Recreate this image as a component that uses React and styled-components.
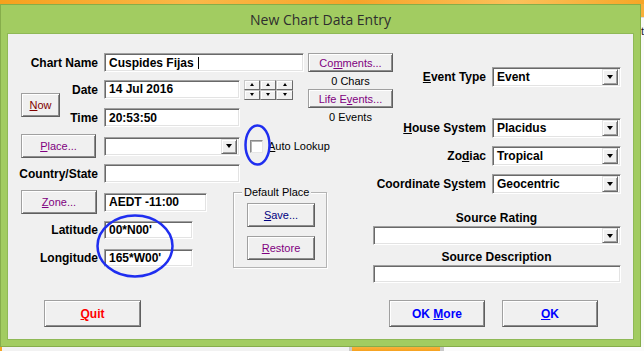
import styled, { createGlobalStyle } from "styled-components";

const GlobalStyle = createGlobalStyle`
  html, body {
    margin: 0;
    padding: 0;
  }
  body {
    background: #f4f4f4;
    font-family: "Liberation Sans", Arial, sans-serif;
    overflow: hidden;
  }
`;

const Screen = styled.div`
  position: relative;
  width: 644px;
  height: 351px;
  display: flex;
  flex-direction: column;
  overflow: hidden;
`;

const TopStrip = styled.div`
  height: 4px;
  flex-shrink: 0;
  background: linear-gradient(90deg, #f6a11d, #fab848 30%, #f7a428 55%, #fbc15a 80%, #f6a626);
`;

const Middle = styled.div`
  display: flex;
  height: 343px;
  flex-shrink: 0;
`;

const RightSliver = styled.div`
  flex: 1;
  background: linear-gradient(180deg, #f8b03a 0, #f8b03a 13px, #dcdcdc 13px, #dcdcdc 14px, #fafafa 14px);
  font-size: 11px;
  color: #222;
  padding-top: 22px;
  overflow: hidden;
  line-height: 11px;
`;

const BottomStrip = styled.div`
  height: 4px;
  display: flex;
  flex-shrink: 0;
`;

const Segment = styled.div`
  width: ${(p) => p.$w}px;
  flex: ${(p) => (p.$grow ? 1 : "none")};
  background: ${(p) => p.$bg};
`;

const Window = styled.div`
  width: 641px;
  height: 343px;
  flex-shrink: 0;
  box-sizing: border-box;
  border: 1px solid #86ad4b;
  background: #a2cc61;
  display: flex;
  flex-direction: column;
  padding: 0 6px 6px;
`;

const TitleBar = styled.div`
  height: 28px;
  flex-shrink: 0;
  display: flex;
  align-items: center;
  justify-content: center;
  font-family: "Open Sans", "Noto Sans", sans-serif;
  font-size: 14px;
  color: #2e2e2e;
`;

const Client = styled.div`
  flex: 1;
  min-height: 0;
  overflow: hidden;
  box-sizing: border-box;
  background: #f0f0f0;
  border: 1px solid #8fb956;
  padding: 19px 0 0 12px;
  display: flex;
  flex-direction: column;
`;

const Body = styled.div`
  display: grid;
  grid-template-columns: 352px 249px;
  align-items: start;
  flex-shrink: 0;
`;

const LeftCol = styled.div`
  display: flex;
  flex-direction: column;
`;

const RightCol = styled.div`
  display: flex;
  flex-direction: column;
`;

const TopBlock = styled.div`
  display: flex;
  align-items: flex-start;
  width: 373px;
`;

const TopFields = styled.div`
  width: 284px;
  display: flex;
  flex-direction: column;
`;

const MiddleStack = styled.div`
  width: 85px;
  margin-left: 4px;
  display: flex;
  flex-direction: column;
  align-items: center;
`;

const FieldRow = styled.div`
  display: grid;
  grid-template-columns: 78px auto;
  column-gap: 6px;
  align-items: center;
  height: ${(p) => p.$h || 19}px;
  margin-top: ${(p) => p.$mt || 0}px;
`;

const DateTimeGrid = styled.div`
  display: grid;
  grid-template-columns: 78px auto;
  grid-template-rows: 19px 19px;
  column-gap: 6px;
  row-gap: 9px;
  align-items: center;
  margin-top: 8px;
`;

const Label = styled.span`
  grid-column: 1;
  grid-row: ${(p) => p.$row || "auto"};
  justify-self: end;
  font-weight: bold;
  font-size: 12px;
  color: #000;
  white-space: nowrap;
`;

const Cell = styled.div`
  grid-column: 2;
  grid-row: ${(p) => p.$row};
  display: flex;
  align-items: flex-start;
`;

const Inline = styled.div`
  display: flex;
  align-items: center;
`;

const Sunken = styled.div`
  box-sizing: border-box;
  width: ${(p) => p.$w}px;
  height: ${(p) => p.$h || 19}px;
  margin-left: ${(p) => p.$ml || 0}px;
  margin-top: ${(p) => p.$mt || 0}px;
  background: #fff;
  border: 1px solid;
  border-color: #a0a0a0 #ffffff #ffffff #a0a0a0;
  box-shadow: inset 1px 1px 0 #696969, inset -1px -1px 0 #e3e3e3;
  display: flex;
  align-items: center;
  padding: 0 2px 0 4px;
  font-weight: bold;
  font-size: 12px;
  color: #000;
  white-space: nowrap;
  flex-shrink: 0;
`;

const Caret = styled.span`
  display: inline-block;
  width: 1px;
  height: 12px;
  background: #000;
  margin-left: 4px;
`;

const SelectText = styled.span`
  flex: 1;
`;

const ArrowBox = styled.div`
  width: 16px;
  height: ${(p) => p.$h || 15}px;
  box-sizing: border-box;
  background: #f0f0f0;
  border: 1px solid;
  border-color: #e3e3e3 #696969 #696969 #e3e3e3;
  box-shadow: inset 1px 1px 0 #fff, inset -1px -1px 0 #a0a0a0;
  display: flex;
  align-items: center;
  justify-content: center;
  flex-shrink: 0;
`;

const Tri = styled.span`
  width: 0;
  height: 0;
  border-left: ${(p) => p.$s}px solid transparent;
  border-right: ${(p) => p.$s}px solid transparent;
  ${(p) => (p.$up ? "border-bottom" : "border-top")}: ${(p) => p.$t}px solid #000;
`;

const Spinner = styled.div`
  display: grid;
  grid-template-columns: 16px 16px 17px;
  grid-template-rows: 10px 10px;
  margin-left: 4px;
`;

const SpinCell = styled.div`
  box-sizing: border-box;
  background: #f0f0f0;
  border: 1px solid;
  border-color: #c8c8c8 #6a6a6a #6a6a6a #c8c8c8;
  box-shadow: inset 1px 1px 0 #fff;
  display: flex;
  align-items: center;
  justify-content: center;
`;

const Button = styled.button`
  box-sizing: border-box;
  width: ${(p) => p.$w}px;
  height: ${(p) => p.$h}px;
  margin: ${(p) => p.$m || 0};
  padding: 0;
  background: #f0f0f0;
  border: 1px solid;
  border-color: #a0a0a0 #5f5f5f #5f5f5f #a0a0a0;
  box-shadow: inset 1px 1px 0 #ffffff, inset -1px -1px 0 #8d8d8d;
  font-family: "Liberation Sans", Arial, sans-serif;
  font-size: ${(p) => (p.$bold ? 12 : 11)}px;
  font-weight: ${(p) => (p.$bold ? "bold" : "normal")};
  color: ${(p) => p.$color || "#800080"};
  display: flex;
  align-items: center;
  justify-content: center;
  flex-shrink: 0;
`;

const NowButton = styled(Button)`
  grid-column: 1;
  grid-row: 1 / 3;
  justify-self: start;
  align-self: start;
  margin: 13px 0 0 1px;
`;

const U = styled.span`
  text-decoration: underline;
`;

const Note = styled.div`
  font-size: 11px;
  line-height: 12px;
  color: #000;
  margin-top: ${(p) => p.$mt}px;
`;

const Checkbox = styled.div`
  box-sizing: border-box;
  width: 13px;
  height: 13px;
  margin-left: 10px;
  background: #fff;
  border: 1px solid;
  border-color: #8a8a8a #e6e6e6 #e6e6e6 #8a8a8a;
  box-shadow: inset 1px 1px 0 #b5b5b5;
`;

const CheckLabel = styled.span`
  margin-left: 5px;
  font-size: 11px;
  color: #000;
  white-space: nowrap;
`;

const LowerBlock = styled.div`
  display: flex;
  align-items: flex-start;
  margin-top: 7px;
`;

const LowerFields = styled.div`
  width: 213px;
  display: flex;
  flex-direction: column;
`;

const GroupBox = styled.div`
  position: relative;
  box-sizing: border-box;
  width: 94px;
  height: 76px;
  margin-top: 2px;
  border: 1px solid #b4b4b4;
  box-shadow: inset 1px 1px 0 #fff, 1px 1px 0 #fff;
  display: flex;
  flex-direction: column;
  align-items: flex-start;
  padding: 10px 0 0 13px;
  gap: 9px;
`;

const Legend = styled.span`
  position: absolute;
  top: -7px;
  left: 8px;
  padding: 0 2px;
  background: #f0f0f0;
  font-size: 11px;
  line-height: 13px;
  color: #000;
  white-space: nowrap;
`;

const OptionRow = styled.div`
  display: flex;
  justify-content: flex-end;
  align-items: center;
  gap: 6px;
  height: 20px;
  margin-top: ${(p) => p.$mt}px;
`;

const RightLabel = styled.span`
  font-weight: bold;
  font-size: 12px;
  color: #000;
  white-space: nowrap;
`;

const CenterLabel = styled.div`
  text-align: center;
  font-weight: bold;
  font-size: 12px;
  line-height: 14px;
  color: #000;
  margin-top: ${(p) => p.$mt}px;
`;

const Footer = styled.div`
  display: flex;
  justify-content: space-between;
  margin-top: 17px;
  padding: 0 35px 0 24px;
  flex-shrink: 0;
`;

const FooterGroup = styled.div`
  display: flex;
  gap: 17px;
`;

const Overlay = styled.svg`
  position: absolute;
  left: 0;
  top: 0;
  pointer-events: none;
`;

const Select = ({ w, h = 19, ml, mt, children }) => (
  <Sunken $w={w} $h={h} $ml={ml} $mt={mt}>
    <SelectText>{children}</SelectText>
    <ArrowBox $h={h - 4}>
      <Tri $s={3.5} $t={4} />
    </ArrowBox>
  </Sunken>
);

const SpinnerBlock = () => (
  <Spinner>
    {[0, 1, 2].map((i) => (
      <SpinCell key={"u" + i}>
        <Tri $up $s={2} $t={3} />
      </SpinCell>
    ))}
    {[0, 1, 2].map((i) => (
      <SpinCell key={"d" + i}>
        <Tri $s={2} $t={3} />
      </SpinCell>
    ))}
  </Spinner>
);

export default function App() {
  return (
    <Screen>
      <GlobalStyle />
      <TopStrip />
      <Middle>
        <Window>
          <TitleBar>New Chart Data Entry</TitleBar>
          <Client>
            <Body>
              <LeftCol>
                <TopBlock>
                  <TopFields>
                    <FieldRow>
                      <Label>Chart Name</Label>
                      <Sunken $w={200}>
                        Cuspides Fijas
                        <Caret />
                      </Sunken>
                    </FieldRow>
                    <DateTimeGrid>
                      <NowButton $w={39} $h={24} $color="#800000">
                        <span>
                          <U>N</U>ow
                        </span>
                      </NowButton>
                      <Label $row={1}>Date</Label>
                      <Cell $row={1}>
                        <Sunken $w={136}>14 Jul 2016</Sunken>
                        <SpinnerBlock />
                      </Cell>
                      <Label $row={2}>Time</Label>
                      <Cell $row={2}>
                        <Sunken $w={136}>20:53:50</Sunken>
                      </Cell>
                    </DateTimeGrid>
                  </TopFields>
                  <MiddleStack>
                    <Button $w={85} $h={19}>
                      <span>
                        Co<U>m</U>ments...
                      </span>
                    </Button>
                    <Note $mt={3}>0 Chars</Note>
                    <Button $w={85} $h={19} $m="2px 0 0">
                      <span>
                        Life E<U>v</U>ents...
                      </span>
                    </Button>
                    <Note $mt={3}>0 Events</Note>
                  </MiddleStack>
                </TopBlock>

                <FieldRow $h={24} $mt={7}>
                  <Button $w={75} $h={24} $m="0 0 0 1px">
                    <span>
                      <U>P</U>lace...
                    </span>
                  </Button>
                  <Inline>
                    <Select w={136} />
                    <Checkbox />
                    <CheckLabel>
                      <U>A</U>uto Lookup
                    </CheckLabel>
                  </Inline>
                </FieldRow>

                <FieldRow $mt={6}>
                  <Label>Country/State</Label>
                  <Sunken $w={136} />
                </FieldRow>

                <LowerBlock>
                  <LowerFields>
                    <FieldRow $h={24}>
                      <Button $w={76} $h={24} $m="0 0 0 1px">
                        <span>
                          <U>Z</U>one...
                        </span>
                      </Button>
                      <Sunken $w={103}>AEDT -11:00</Sunken>
                    </FieldRow>
                    <FieldRow $h={18} $mt={7}>
                      <Label>Latitude</Label>
                      <Sunken $w={89} $h={18}>
                        00*N00'
                      </Sunken>
                    </FieldRow>
                    <FieldRow $h={18} $mt={10}>
                      <Label>Longitude</Label>
                      <Sunken $w={89} $h={18}>
                        165*W00'
                      </Sunken>
                    </FieldRow>
                  </LowerFields>
                  <GroupBox>
                    <Legend>Default Place</Legend>
                    <Button $w={68} $h={24} $color="#000080">
                      <span>
                        <U>S</U>ave...
                      </span>
                    </Button>
                    <Button $w={68} $h={24}>
                      <span>
                        <U>R</U>estore
                      </span>
                    </Button>
                  </GroupBox>
                </LowerBlock>
              </LeftCol>

              <RightCol>
                <OptionRow $mt={14}>
                  <RightLabel>
                    <U>E</U>vent Type
                  </RightLabel>
                  <Select w={129} h={20}>
                    Event
                  </Select>
                </OptionRow>
                <OptionRow $mt={31}>
                  <RightLabel>
                    <U>H</U>ouse System
                  </RightLabel>
                  <Select w={129} h={20}>
                    Placidus
                  </Select>
                </OptionRow>
                <OptionRow $mt={8}>
                  <RightLabel>
                    Zo<U>d</U>iac
                  </RightLabel>
                  <Select w={129} h={20}>
                    Tropical
                  </Select>
                </OptionRow>
                <OptionRow $mt={8}>
                  <RightLabel>
                    Coordinate S<U>y</U>stem
                  </RightLabel>
                  <Select w={129} h={20}>
                    Geocentric
                  </Select>
                </OptionRow>
                <CenterLabel $mt={17}>Source Rating</CenterLabel>
                <Select w={248} ml={1} mt={1} />
                <CenterLabel $mt={5}>Source Description</CenterLabel>
                <Sunken $w={248} $h={18} $ml={1} $mt={1} />
              </RightCol>
            </Body>

            <Footer>
              <Button $w={97} $h={27} $bold $color="#ff0000">
                <span>
                  <U>Q</U>uit
                </span>
              </Button>
              <FooterGroup>
                <Button $w={96} $h={27} $bold $color="#0000ff">
                  <span>
                    OK <U>M</U>ore
                  </span>
                </Button>
                <Button $w={96} $h={27} $bold $color="#0000ff">
                  <span>
                    <U>O</U>K
                  </span>
                </Button>
              </FooterGroup>
            </Footer>
          </Client>
        </Window>
        <RightSliver>t</RightSliver>
      </Middle>
      <BottomStrip>
        <Segment $w={2} $bg="#f6a623" />
        <Segment $w={347} $bg="#f2f2f2" />
        <Segment $w={3} $bg="#c9c9c9" />
        <Segment $w={88} $bg="linear-gradient(180deg, #f8b23c, #f6a11f)" />
        <Segment $w={4} $bg="#c9c9c9" />
        <Segment $grow $bg="#fbfbfb" />
      </BottomStrip>
      <Overlay width="644" height="351" viewBox="0 0 644 351">
        <ellipse cx="257.5" cy="145" rx="12" ry="19.5" fill="none" stroke="#1f2ef0" strokeWidth="2.5" />
        <ellipse cx="135" cy="246" rx="37.5" ry="30.5" fill="none" stroke="#1f2ef0" strokeWidth="2.5" />
      </Overlay>
    </Screen>
  );
}
